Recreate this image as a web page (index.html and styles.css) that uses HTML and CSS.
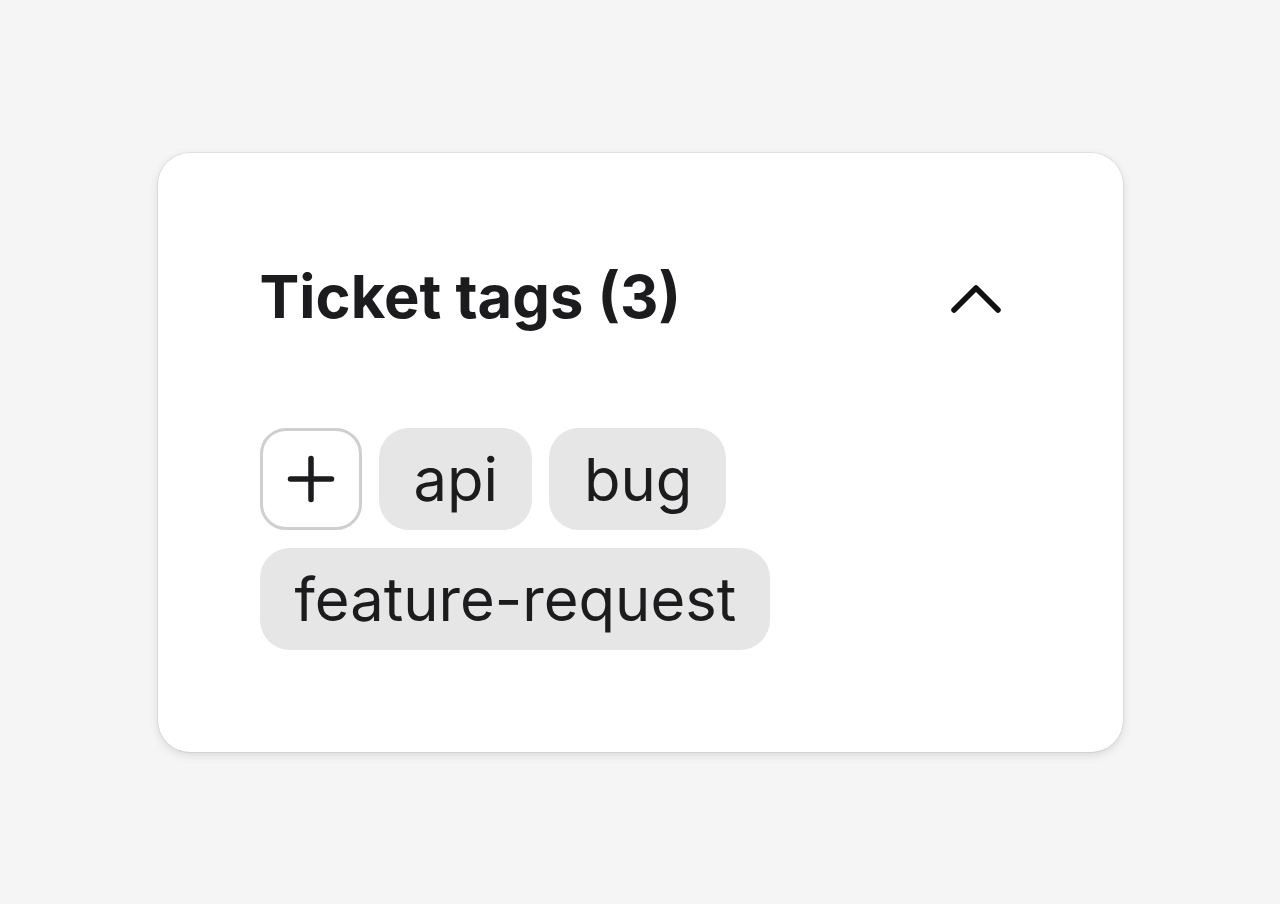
FILE: index.html
```html
<!DOCTYPE html>
<html lang="en">

<head>
  <meta charset="UTF-8">
  <meta name="viewport" content="width=device-width, initial-scale=1.0">
  <title>Ticket tags</title>
  <link rel="stylesheet" href="styles.css">
</head>

<body>
  <main class="card">
    <div class="card-header">
      <h2>Ticket tags (3)</h2>
      <button type="button" class="toggle" aria-label="Collapse">
        <svg width="56" height="34" viewBox="0 0 56 34">
          <path d="M6 29 L28 7 L50 29" fill="none" stroke="#111" stroke-width="5.5" stroke-linecap="round" stroke-linejoin="round"/>
        </svg>
      </button>
    </div>

    <div class="tag-list">
      <button type="button" class="add-tag" aria-label="Add tag">
        <svg width="50" height="50" viewBox="0 0 50 50">
          <path d="M25 4.5 V45.5 M4.5 25 H45.5" fill="none" stroke="#1c1c1f" stroke-width="5.5" stroke-linecap="round"/>
        </svg>
      </button>
      <span class="tag">api</span>
      <span class="tag">bug</span>
      <span class="tag">feature-request</span>
    </div>
  </main>
</body>

</html>
```

FILE: styles.css
```css
body {
  font-family: Inter, "Noto Sans", sans-serif;
  margin: 0;
  padding: 0;
  background-color: #f5f5f5;
  color: #1c1c1f;
  display: flex;
  align-items: center;
  justify-content: center;
  min-height: 100vh;
}

.card {
  width: 965px;
  box-sizing: border-box;
  background-color: #fff;
  padding: 102px;
  border-radius: 32px;
  box-shadow: 0 0 0 1px rgba(0, 0, 0, 0.06), 0 3px 10px rgba(0, 0, 0, 0.12);
}

.card-header {
  display: flex;
  justify-content: space-between;
  align-items: center;
  height: 84px;
}

.card-header h2 {
  margin: 0;
  font-size: 59.7px;
  font-weight: 700;
  line-height: 1;
}

.toggle {
  background: none;
  border: none;
  padding: 0;
  margin-right: 17px;
  margin-top: 2px;
  display: flex;
  cursor: pointer;
}

.tag-list {
  display: flex;
  flex-wrap: wrap;
  gap: 18px 17px;
  margin-top: 89px;
}

.add-tag {
  width: 102px;
  height: 102px;
  box-sizing: border-box;
  background-color: #fff;
  border: 3px solid #cfcfd1;
  border-radius: 26px;
  display: flex;
  align-items: center;
  justify-content: center;
  padding: 0;
  cursor: pointer;
}

.tag {
  height: 102px;
  box-sizing: border-box;
  padding: 0 34px 0 35px;
  background-color: #e6e6e6;
  border-radius: 30px;
  font-size: 59.7px;
  line-height: 102px;
  color: #1c1c1f;
}
```
